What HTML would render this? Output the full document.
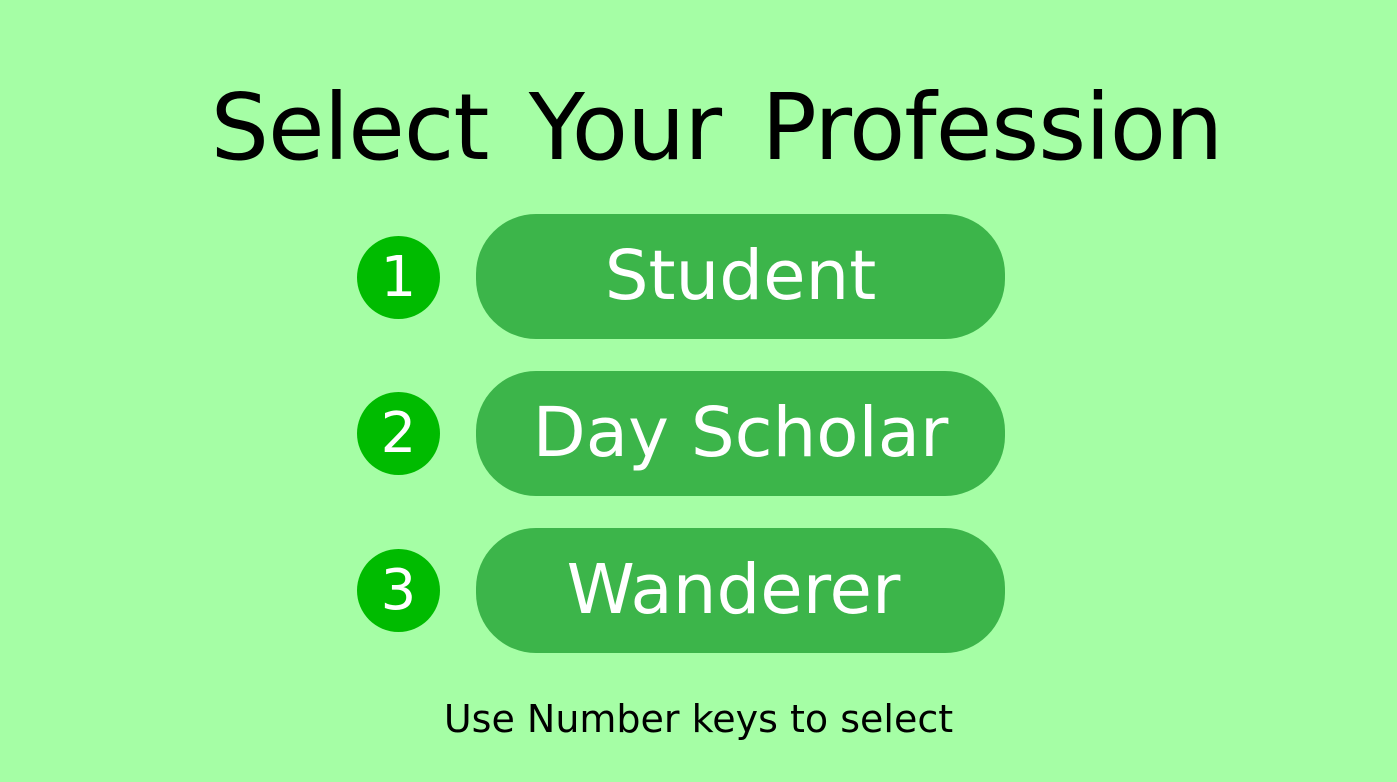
<!DOCTYPE html>
<html><head><meta charset="utf-8"><style>
html,body{margin:0;padding:0}
body{width:1397px;height:782px;background:#a5fea5;position:relative;overflow:hidden;font-family:"DejaVu Sans","Liberation Sans",sans-serif}
.t{position:absolute;left:18px;width:1397px;text-align:center;top:68px;font-size:92px;line-height:120px;color:#000;word-spacing:12px;letter-spacing:-1px}
.b{position:absolute;left:476px;width:529px;height:125px;border-radius:60px;background:#3cb54a;color:#fff;font-size:69px;line-height:125px;text-align:center}
.c{position:absolute;left:357px;width:83px;height:83px;border-radius:50%;background:#00bb00;color:#fff;font-size:56px;line-height:83px;text-align:center}
.f{position:absolute;left:0;width:1397px;text-align:center;top:694px;font-size:38px;line-height:50px;color:#000}
</style></head><body>
<div class="t">Select Your Profession</div>
<div class="c" style="top:236px">1</div>
<div class="b" style="top:214px">Student</div>
<div class="c" style="top:392px">2</div>
<div class="b" style="top:371px">Day Scholar</div>
<div class="c" style="top:549px">3</div>
<div class="b" style="top:528px;text-indent:-14px">Wanderer</div>
<div class="f">Use Number keys to select</div>
</body></html>
